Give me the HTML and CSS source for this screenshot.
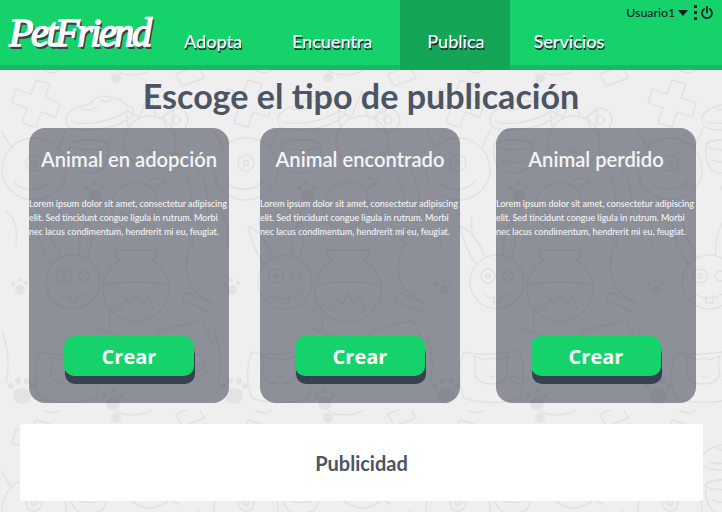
FILE: index.html
```html
<!DOCTYPE html>
<html lang="es">
<head>
<meta charset="utf-8">
<title>PetFriend</title>
<link rel="stylesheet" href="styles.css">
</head>
<body>
<svg class="doodles" width="722" height="512" aria-hidden="true">
  <defs>
    <pattern id="tile" x="0" y="70" width="212" height="340" patternUnits="userSpaceOnUse">
      <g fill="none" stroke="#e2e2e2" stroke-width="1.5" stroke-linejoin="round" stroke-linecap="round">
        <path d="M34 -8l14 4-5 14 15 5-4 14-15-5-5 15-14-4 5-15-15-5 4-14 15 5z" transform="translate(2 18)"/>
        <path d="M66 48c2-8 12-12 24-14 4-8 16-10 22-6 8 0 12 4 14 8 6 0 9 4 7 8-8 12-42 20-62 14-4-2-6-6-5-10z"/>
        <path d="M80 38c6 4 14 2 18-2M100 30c4 2 8 2 12 0M72 52c14 4 36 0 54-10"/>
        <circle cx="176" cy="50" r="12"/><circle cx="176" cy="50" r="4"/>
        <path d="M140 45l10-24M150 21l6 26"/>
        <path d="M176 4l22-8 6 12-22 8z"/>
        <path d="M115 -1c6 8 30 8 38-1M40 -2c8 6 16 6 22 0"/>
        <path d="M2 100c0-18 14-32 32-32s32 14 32 32c0 16-14 30-32 30S2 116 2 100z"/><circle cx="34" cy="93" r="8"/><circle cx="34" cy="93" r="2.5"/>
        <path d="M14 112c8 10 30 10 38-2M2 62l10 16M66 60l-8 18"/>
        <path d="M70 74c8-6 30-6 38 0 2 10-2 22-6 26-8 4-20 4-26 0-4-4-8-16-6-26z"/><ellipse cx="89" cy="75" rx="19" ry="5"/>
        <path d="M76 90c8 3 18 3 26 0"/>
        <circle cx="150" cy="72" r="26"/><path d="M128 56l-2-16 14 8M172 56l2-16-14 8M144 70h.1M156 70h.1M146 80c3 3 6 3 8 0M168 82l14 2M166 88l12 6"/>
        <path d="M112 142c-4-16 10-30 26-30 14 2 22 14 16 30-4 12-14 18-24 18-10-2-16-8-18-18zM150 110c6-4 12-2 16 2-6 2-10 6-12 10"/>
        <path d="M124 128h.1M120 142c6 6 16 6 24 0M186 108c6 12 8 28 4 44M198 100c10 14 12 36 6 54"/>
        <path d="M6 142c8 4 12 16 10 34M48 146c-2 10 0 20 6 28"/>
        <circle cx="73" cy="212" r="27"/><circle cx="64" cy="206" r="7"/><circle cx="64" cy="206" r="2"/><circle cx="84" cy="206" r="5"/><path d="M60 224c6 6 20 6 28-2M70 226v7h7v-7"/>
        <path d="M52 194c-10-14-14-28-16-38 10 4 20 16 24 30M80 186c-2-12 2-28 8-36 4 10 4 24 0 38"/>
        <path d="M116 180h40c2 4 0 8-4 10 14 8 20 24 16 38-6 16-20 24-32 24-14 0-28-10-32-24-4-14 2-30 16-38-4-2-6-6-4-10z"/>
        <path d="M106 215c10-4 50-4 60 0M120 240l6-12 4 6 6-10 6 10 6-8 6 14"/>
        <path d="M208 158c-8 0-12 4-14 8l-6 4 6 4c-8 10-10 22-6 34 4 12 12 20 24 24l6 30M212 158c6 2 8 6 10 12 4 14 2 30-4 40"/>
        <path d="M186 222l28 12-4 8-28-12z"/>
        <path d="M100 240c6-6 14-6 18-2M110 240v24M98 258l22 8"/>
        <path d="M40 282c16 4 40 2 56-2 4 14 4 34 0 48-16 6-40 6-56 0-6-14-6-32 0-46z"/>
        <path d="M52 296l-2-10 10 4c4-2 10-2 14 0l10-4-2 10c4 8 0 18-15 18s-19-10-15-18zM60 300h.1M74 300h.1M66 306c2 2 3 2 4 0M86 306l8 2M86 310l8 4"/>
        <path d="M157 262l44-12 18 38-42 14zM157 262l22 50 38-12"/>
        <path d="M175 292l24-8 6 14-22 8z"/>
        <path d="M128 280c6-6 14-4 16 4l6 26-14 4-6-22zM2 262c6 14 8 34 4 50"/>
      </g>
      <g fill="#e3e3e3">
        <ellipse cx="22" cy="326" rx="9" ry="8"/><circle cx="11" cy="316" r="3"/><circle cx="18" cy="311" r="3"/><circle cx="27" cy="311" r="3"/><circle cx="33" cy="316" r="3"/>
        <ellipse cx="20" cy="220" rx="5" ry="5"/><circle cx="13" cy="214" r="2"/><circle cx="19" cy="210" r="2"/><circle cx="26" cy="213" r="2"/>
        <ellipse cx="95" cy="125" rx="7" ry="6"/><circle cx="87" cy="118" r="2.5"/><circle cx="94" cy="113" r="2.5"/><circle cx="102" cy="117" r="2.5"/>
        <ellipse cx="113" cy="333" rx="7" ry="7"/><circle cx="105" cy="325" r="2.5"/><circle cx="113" cy="321" r="2.5"/><circle cx="121" cy="325" r="2.5"/>
        <circle cx="116" cy="8" r="5"/>
      </g>
    </pattern>
  </defs>
  <rect width="722" height="512" fill="#efefef"/>
  <rect y="70" width="722" height="442" fill="url(#tile)"/>
</svg>

<header class="topbar">
  <a class="logo" href="#">PetFriend</a>
  <nav class="nav">
    <a class="nav-item nav-adopta" href="#">Adopta</a>
    <a class="nav-item nav-encuentra" href="#">Encuentra</a>
    <a class="nav-item nav-publica" href="#">Publica</a>
    <a class="nav-item nav-servicios" href="#">Servicios</a>
  </nav>
  <div class="user">
    <span class="user-name">Usuario1</span>
    <svg class="caret" width="10" height="6" viewBox="0 0 10 6"><path d="M0 0h10L5 6z"/></svg>
    <svg class="dots" width="3" height="15" viewBox="0 0 3 15"><path d="M0 0h3v3H0zM0 6h3v3H0zM0 12h3v3H0z"/></svg>
    <svg class="power" width="12" height="13" viewBox="0 0 12 13"><path d="M3.2 3a5 5 0 1 0 5.6 0M6 .5v6"/></svg>
  </div>
</header>

<main class="content">
  <h1 class="title">Escoge el tipo de publicación</h1>
  <section class="cards">
    <article class="card">
      <h2 class="card-title">Animal en adopción</h2>
      <p class="card-text">Lorem ipsum dolor sit amet, consectetur adipiscing elit. Sed tincidunt congue ligula in rutrum. Morbi nec lacus condimentum, hendrerit mi eu, feugiat.</p>
      <a class="btn" href="#">Crear</a>
    </article>
    <article class="card">
      <h2 class="card-title">Animal encontrado</h2>
      <p class="card-text">Lorem ipsum dolor sit amet, consectetur adipiscing elit. Sed tincidunt congue ligula in rutrum. Morbi nec lacus condimentum, hendrerit mi eu, feugiat.</p>
      <a class="btn" href="#">Crear</a>
    </article>
    <article class="card card-last">
      <h2 class="card-title">Animal perdido</h2>
      <p class="card-text">Lorem ipsum dolor sit amet, consectetur adipiscing elit. Sed tincidunt congue ligula in rutrum. Morbi nec lacus condimentum, hendrerit mi eu, feugiat.</p>
      <a class="btn" href="#">Crear</a>
    </article>
  </section>
  <aside class="ad">Publicidad</aside>
</main>
</body>
</html>
```

FILE: styles.css
```css
* { box-sizing: border-box; }
html, body { margin: 0; height: 512px; overflow: hidden; }
body { font-family: Lato, sans-serif; position: relative; background: #efefef; }
a { text-decoration: none; color: inherit; }

.doodles { position: absolute; top: 0; left: 0; z-index: -1; }

.topbar {
  height: 70px;
  display: flex;
  background: #15d26b;
  border-bottom: 5px solid #17b965;
}
.logo {
  width: 184px;
  padding: 9px 0 0 9px;
  font-family: "Liberation Serif", serif;
  font-style: italic;
  font-weight: 400;
  font-size: 40px;
  line-height: 48px;
  letter-spacing: -2.4px;
  color: #fff;
  white-space: nowrap;
  -webkit-text-stroke: 1.6px #fff;
  text-shadow: 1px 1px 0 #374151, 2px 2px 0 #374151, 2px 3px 0 #374151;
}
.nav { display: flex; height: 70px; }
.nav-item {
  display: block;
  font-size: 18px;
  font-weight: 500;
  line-height: 83px;
  color: #fff;
  text-shadow: 1px 2px 0 #1f2937;
}
.nav-adopta { padding: 0 50px 0 0; }
.nav-encuentra { padding: 0 28px 0 0; }
.nav-publica { padding: 0 25px 0 27px; background: #14a556; }
.nav-servicios { padding: 0 0 0 24px; }

.user {
  margin-left: 22px;
  height: 25px;
  display: flex;
  align-items: center;
  font-size: 12.3px;
  color: #111827;
  font-weight: 500;
}
.caret { margin-left: 3px; fill: #111827; }
.dots { margin-left: 6px; fill: #111827; }
.power { margin-left: 4px; fill: none; stroke: #111827; stroke-width: 1.7; stroke-linecap: round; }

.content { display: block; }
.title {
  margin: 5px 0 12px;
  text-align: center;
  font-size: 34.1px;
  line-height: 41px;
  font-weight: 700;
  color: #4b5563;
}
.cards { display: flex; padding-left: 29px; gap: 31px; }
.card {
  width: 200px;
  height: 275px;
  border-radius: 16px;
  background: rgba(60, 66, 82, 0.55);
  display: flex;
  flex-direction: column;
  align-items: center;
  color: #fff;
}
.card-last { margin-left: 5px; }
.card-title {
  margin: 18px 0 0;
  font-size: 20.2px;
  line-height: 27px;
  font-weight: 600;
  color: #f3f4f6;
  white-space: nowrap;
}
.card-text {
  margin: 24px 0 0;
  width: 200px;
  font-size: 9px;
  line-height: 14px;
  font-weight: 500;
  letter-spacing: -0.04px;
  color: #f3f4f6;
}
.btn {
  margin-top: 97px;
  width: 130px;
  height: 40px;
  border-radius: 10px;
  background: #15d26b;
  box-shadow: 1px 8px 0 #374151;
  text-align: center;
  font-family: "Open Sans", sans-serif;
  font-weight: 700;
  font-size: 20px;
  line-height: 41px;
  color: #fff;
}
.ad {
  margin: 21px 19px 0 20px;
  height: 77px;
  background: #fff;
  border-radius: 3px;
  text-align: center;
  font-size: 20px;
  font-weight: 700;
  line-height: 78px;
  color: #4b5563;
}
```
